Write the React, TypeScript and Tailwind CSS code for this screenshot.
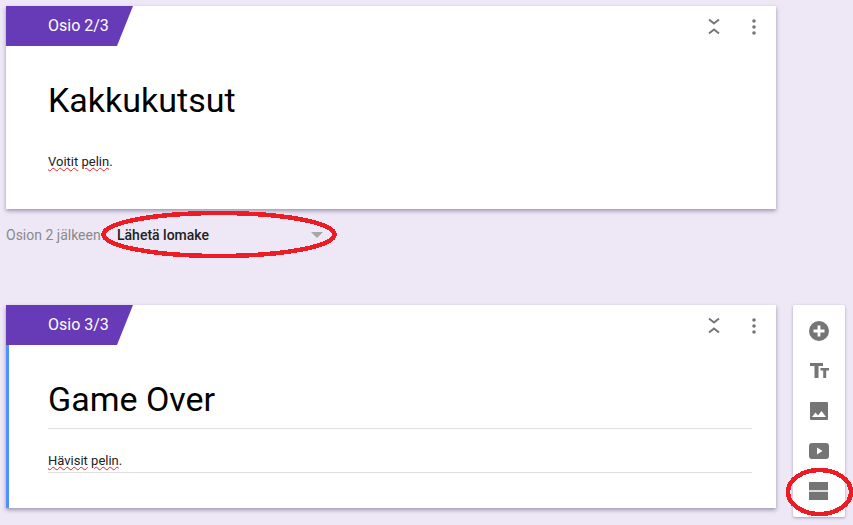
import React from 'react';

const font = { fontFamily: 'Roboto, "Liberation Sans", sans-serif' };

const Squiggle: React.FC<{ children: React.ReactNode }> = ({ children }) => (
  <span className="underline decoration-wavy decoration-[#e8202a] decoration-1 underline-offset-1">{children}</span>
);

const SectionCard: React.FC<{
  label: string;
  title: string;
  active?: boolean;
  children: React.ReactNode;
}> = ({ label, title, active, children }) => (
  <div className="relative w-[770px] h-[203px] shrink-0 bg-white shadow-[0_2px_4px_rgba(60,50,90,0.45)]">
    <div className="flex items-start justify-between">
      <div className="w-[127px] h-[40px] pl-[42px] bg-[#673ab7] text-white text-[16px] leading-[40px] [clip-path:polygon(0_0,100%_0,87.4%_100%,0_100%)]">
        {label}
      </div>
      <div className="flex items-start pt-[12px] pr-[20px] gap-[30px]">
        <svg width="16" height="17" viewBox="0 0 16 17" className="text-[#757575]" fill="none" stroke="currentColor" strokeWidth="2">
          <path d="M3 1.500l5 4 5-4" />
          <path d="M3 15.500l5-4 5 4" />
        </svg>
        <svg width="4" height="16" viewBox="0 0 4 16" className="mt-[1px] text-[#757575]" fill="currentColor">
          <circle cx="2" cy="2" r="1.800" />
          <circle cx="2" cy="8" r="1.800" />
          <circle cx="2" cy="14" r="1.800" />
        </svg>
      </div>
    </div>
    {active && <div className="absolute left-0 top-[40px] bottom-0 w-[3px] bg-[#4d90fe]" />}
    <div className="pl-[42px] pr-[24px] pt-[29px]">
      <div className={`text-[34px] leading-[50px] text-black pb-[4px] ${active ? 'border-b border-[#e0e0e0]' : 'border-b border-transparent'}`}>
        {title}
      </div>
      <div className={`mt-[20px] h-[24px] text-[13px] leading-[24px] text-[#212121] ${active ? 'border-b border-[#e0e0e0]' : ''}`}>
        {children}
      </div>
    </div>
  </div>
);

const Toolbar: React.FC = () => (
  <div className="w-[52px] h-[212px] rounded-[2px] bg-white shadow-[0_1px_3px_rgba(60,50,90,0.4)] flex flex-col items-center pt-[15px] gap-[18px] text-[#757575]">
    <svg width="22" height="22" viewBox="0 0 22 22" fill="currentColor">
      <path fillRule="evenodd" d="M11 1a10 10 0 1 0 0 20 10 10 0 0 0 0-20zm-1.400 4.500h2.800v4.100h4.100v2.800h-4.100v4.100H9.600v-4.100H5.500V9.600h4.100z" />
    </svg>
    <svg width="22" height="22" viewBox="0 0 22 22" fill="currentColor">
      <path d="M2 3h13v3h-4.500v12H6.500V6H2z" />
      <path d="M12.500 8H21v2.500h-2.800V18h-3v-7.500h-2.700z" />
    </svg>
    <svg width="22" height="22" viewBox="0 0 22 22" fill="currentColor">
      <path fillRule="evenodd" d="M3 2h16a1 1 0 0 1 1 1v16a1 1 0 0 1-1 1H3a1 1 0 0 1-1-1V3a1 1 0 0 1 1-1zm1 15h14l-4.500-6-3.500 4.500-2.500-3z" />
    </svg>
    <svg width="22" height="22" viewBox="0 0 22 22" fill="currentColor">
      <path fillRule="evenodd" d="M4 3h14a3 3 0 0 1 3 3v10a3 3 0 0 1-3 3H4a3 3 0 0 1-3-3V6a3 3 0 0 1 3-3zm5 4.500v7l5.500-3.500z" />
    </svg>
    <svg width="22" height="22" viewBox="0 0 22 22" fill="currentColor">
      <path d="M1 2h19v8.300H1zM1 11.700h19V20H1z" />
    </svg>
  </div>
);

const App: React.FC = () => (
  <div className="relative w-[853px] h-[525px] overflow-hidden bg-[#ede7f6] pl-[6px] pt-[6px]" style={font}>
    <SectionCard label="Osio 2/3" title="Kakkukutsut">
      <Squiggle>Voitit</Squiggle> <Squiggle>pelin</Squiggle>.
    </SectionCard>

    <div className="h-[96px] pt-[17px] flex items-start text-[14px] leading-[18px]">
      <span className="w-[111px] text-[#8a8a8a]">Osion 2 jälkeen</span>
      <span className="w-[194px] font-medium text-[#212121]">Lähetä lomake</span>
      <span className="mt-[6px] w-0 h-0 border-x-[6px] border-x-transparent border-t-[6px] border-t-[#a8a8a8]" />
    </div>

    <div className="flex items-start gap-[17px]">
      <SectionCard label="Osio 3/3" title="Game Over" active>
        <Squiggle>Hävisit</Squiggle> <Squiggle>pelin</Squiggle>.
      </SectionCard>
      <Toolbar />
    </div>

    {/* punaiset merkinnät kuvakaappauksen päällä */}
    <svg className="absolute left-0 top-0 pointer-events-none" width="853" height="525" fill="none" stroke="#ed1c24" strokeWidth="4.500" shapeRendering="crispEdges">
      <ellipse cx="219" cy="234.500" rx="115.500" ry="21.500" />
      <ellipse cx="819.500" cy="492" rx="31.500" ry="22" />
    </svg>
  </div>
);

export default App;
